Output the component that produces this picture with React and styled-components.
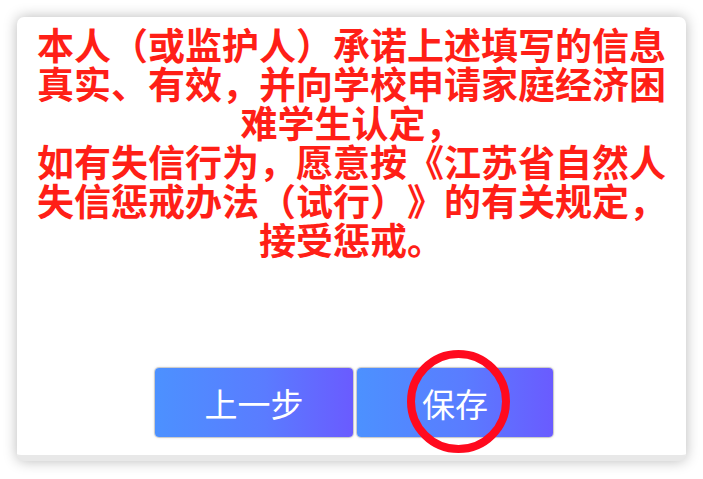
// Packages
import React from "react"
import styled, { createGlobalStyle } from "styled-components"

// Styles
const GlobalStyle = createGlobalStyle`
    html, body {
        margin: 0;
        padding: 0;
        background: #ffffff;
    }
    body {
        font-family: "Noto Sans CJK SC", "Noto Sans", sans-serif;
    }
`

const Page = styled.div`
    width: 703px;
    height: 479px;
    padding: 17px 17px 0 17px;
    box-sizing: border-box;
    overflow: hidden;
`

const Card = styled.div`
    width: 669px;
    height: 444px;
    box-sizing: border-box;
    background: #ffffff;
    border-radius: 7px;
    border-bottom: 6px solid #e8e8e8;
    box-shadow: 0 0 14px rgba(0, 0, 0, 0.28);
    display: flex;
    flex-direction: column;
    padding: 8px 18px 18px 18px;
`

const Notice = styled.p`
    margin: 0;
    color: #ff1f17;
    font-size: 37px;
    line-height: 39px;
    font-weight: 700;
    text-align: center;
    text-spacing-trim: space-all;
    letter-spacing: 0;
`

const Footer = styled.div`
    margin-top: auto;
    display: flex;
    justify-content: center;
    gap: 4px;
    padding-left: 5px;
`

const Button = styled.button`
    position: relative;
    width: ${(props) => props.width}px;
    height: 69px;
    border: none;
    border-radius: 4px;
    background: linear-gradient(90deg, #4c91ff 0%, #5a7cff 55%, #6a5bff 100%);
    box-shadow: 0 0 0 1px rgba(0, 0, 0, 0.12), 0 0 3px rgba(0, 0, 0, 0.25);
    color: #ffffff;
    font-family: "Noto Sans CJK SC", "Noto Sans", sans-serif;
    font-size: 33px;
    font-weight: 400;
    display: flex;
    align-items: center;
    justify-content: center;
    padding: 0;
    cursor: pointer;
`

const Highlight = styled.span`
    position: absolute;
    left: 50px;
    top: -18px;
    width: 87px;
    height: 87px;
    border: 8px solid #ff0a1e;
    border-radius: 50%;
    pointer-events: none;
`

function App() {
    return (
        <Page>
            <GlobalStyle />
            <Card>
                <Notice>
                    本人（或监护人）承诺上述填写的信息真实、有效，并向学校申请家庭经济困难学生认定，
                    <br />
                    如有失信行为，愿意按《江苏省自然人失信惩戒办法（试行）》的有关规定，接受惩戒。
                </Notice>

                <Footer>
                    <Button width={198}>上一步</Button>
                    <Button width={196}>
                        保存
                        <Highlight />
                    </Button>
                </Footer>
            </Card>
        </Page>
    )
}

export default App
